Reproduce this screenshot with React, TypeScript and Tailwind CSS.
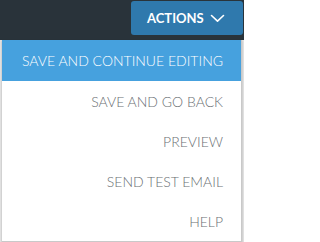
const items = [
  "SAVE AND CONTINUE EDITING",
  "SAVE AND GO BACK",
  "PREVIEW",
  "SEND TEST EMAIL",
  "HELP",
];

export default function App() {
  return (
    <div className="relative w-[244px] h-[242px] bg-[#e4e4e4] font-['Lato',sans-serif] overflow-hidden">
      {/* Top bar */}
      <div className="h-[40px] bg-[#29333a] flex justify-end items-start pt-[1px] pr-[1px]">
        <button className="h-[34px] w-[112px] rounded-[3px] bg-[#2f79ad] text-white font-bold text-[13px] flex items-center pl-[16px] gap-[6px]">
          <span className="leading-none">ACTIONS</span>
          <svg width="15" height="9" viewBox="0 0 15 9" fill="none" className="mt-[1px]">
            <path d="M1.5 1.5 L7.5 7.2 L13.5 1.5" stroke="white" strokeWidth="1.6" strokeLinecap="round" strokeLinejoin="round" />
          </svg>
        </button>
      </div>

      {/* Dropdown */}
      <ul className="absolute top-[40px] left-[2px] w-[240px] bg-white border-r border-b border-[#c9c9c9] shadow-[0_1px_2px_rgba(0,0,0,0.25)]">
        {items.map((label, i) => (
          <li
            key={label}
            className={`flex items-center justify-end pr-[18px] text-[14px] font-light ${
              i === 0 ? "h-[41px] bg-[#46a1de] text-white" : "h-[40px] text-[#6a6f73]"
            }`}
          >
            {label}
          </li>
        ))}
      </ul>
    </div>
  );
}
